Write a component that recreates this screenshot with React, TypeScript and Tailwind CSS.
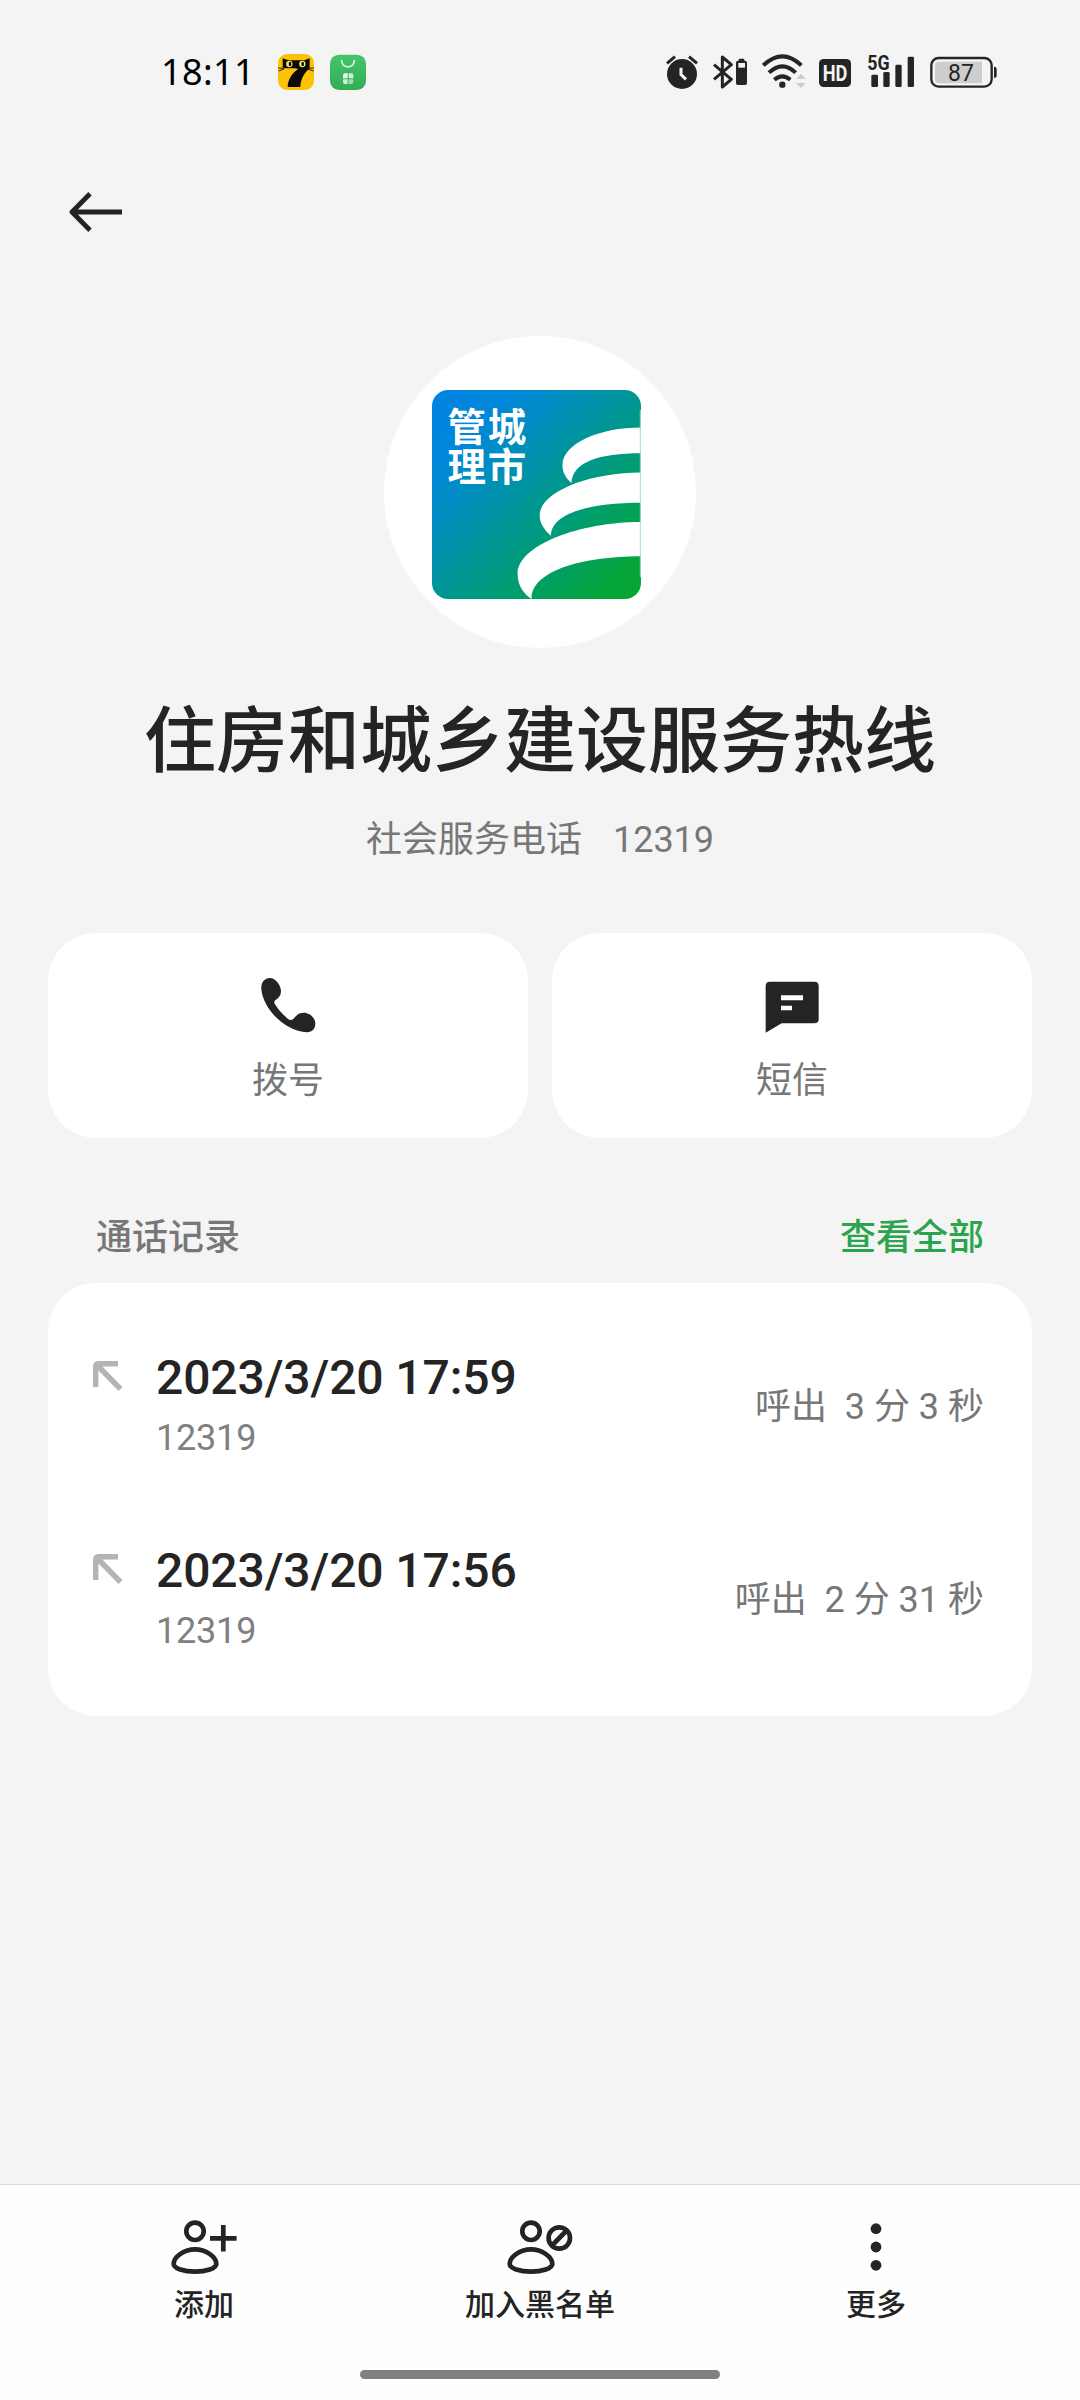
import type { ReactNode } from "react"

const calls = [
  { time: "2023/3/20 17:59", number: "12319", duration: "呼出  3 分 3 秒" },
  { time: "2023/3/20 17:56", number: "12319", duration: "呼出  2 分 31 秒" },
]

function CatAppIcon() {
  return (
    <svg className="size-9" viewBox="0 0 108 108">
      <rect width="108" height="108" rx="27" fill="#fcc205" />
      <path d="M14 13L31 19H79L95 13V43C79 56 68 76 67 99H29C30 76 42 58 60 46Q56 43 50 43H14Z" fill="#0c0a06" />
      <path d="M0 42L16 43M2 51L18 45M108 42L90 43M107 51L88 45" stroke="#0c0a06" strokeWidth="2.5" />
      <circle cx="34" cy="30" r="9.5" fill="#f4e86a" />
      <circle cx="73" cy="30" r="9.5" fill="#f4e86a" />
      <ellipse cx="36" cy="30" rx="4" ry="7" fill="#0c0a06" />
      <ellipse cx="74" cy="30" rx="4" ry="7" fill="#0c0a06" />
    </svg>
  )
}

function StoreAppIcon() {
  return (
    <svg className="size-9" viewBox="0 0 108 108">
      <defs>
        <linearGradient id="store" x1="0" y1="0" x2="0" y2="1">
          <stop offset="0" stopColor="#45c46b" />
          <stop offset="1" stopColor="#31ad56" />
        </linearGradient>
      </defs>
      <rect y="2" width="108" height="106" rx="27" fill="url(#store)" />
      <path d="M35 20C37 45 71 45 73 20" fill="none" stroke="#dcf8e3" strokeWidth="5" strokeLinecap="round" />
      <g fill="#e6fbea">
        <path d="M45 58H53V73H39V64Q39 58 45 58Z" />
        <path d="M56 58H64Q70 58 70 64V73H56Z" opacity=".85" />
        <path d="M39 76H53V90H45Q39 90 39 84Z" opacity=".85" />
        <path d="M56 76H70V84Q70 90 64 90H56Z" opacity=".6" />
      </g>
    </svg>
  )
}

function AlarmIcon() {
  return (
    <svg className="h-[35px] w-8" viewBox="0 0 96 105">
      <circle cx="48" cy="60" r="45" fill="#242424" />
      <path d="M3 28L27 8M69 8L93 28" stroke="#242424" strokeWidth="9" />
      <path d="M45 41V62L60 76" fill="none" stroke="#f4f4f4" strokeWidth="9" />
    </svg>
  )
}

function BluetoothIcon() {
  return (
    <svg className="h-[35px] w-9" viewBox="0 0 108 105">
      <path d="M6 32L58 76L31 99V9L58 32L6 76" fill="none" stroke="#242424" strokeWidth="9" strokeLinejoin="round" />
      <rect x="80" y="14" width="17" height="9" rx="3" fill="#242424" />
      <rect x="72" y="20" width="33" height="73" rx="6" fill="#242424" />
      <rect x="79" y="27" width="20" height="14" fill="#f4f4f4" />
    </svg>
  )
}

function WifiIcon() {
  return (
    <svg className="h-[35px] w-11" viewBox="0 0 132 105">
      <g fill="none" stroke="#242424" strokeWidth="12">
        <path d="M4 34Q61 -20 118 34" />
        <path d="M21 56Q61 18 101 56" />
        <path d="M37 77Q61 57 85 77" />
      </g>
      <circle cx="61" cy="92" r="9.5" fill="#242424" />
      <path d="M117 59L131 75H103ZM117 102L131 87H103Z" fill="#cbcbcb" />
    </svg>
  )
}

function HdIcon() {
  return (
    <svg className="h-[35px] w-8" viewBox="0 0 96 105">
      <rect y="15" width="96" height="84" rx="14" fill="#242424" />
      <text x="48" y="80" textAnchor="middle" textLength="74" lengthAdjust="spacingAndGlyphs" fontFamily="Roboto, sans-serif" fontWeight="700" fontSize="64" fill="#f4f4f4">
        HD
      </text>
    </svg>
  )
}

function SignalIcon() {
  return (
    <svg className="h-[35px] w-12 overflow-visible" viewBox="0 0 144 105">
      <g fill="#242424">
        <text x="1" y="47" textLength="67" lengthAdjust="spacingAndGlyphs" fontFamily="Roboto, sans-serif" fontWeight="700" fontSize="59">
          5G
        </text>
        <rect x="13" y="62" width="20" height="37" rx="4" />
        <rect x="49" y="54" width="19" height="45" rx="4" />
        <rect x="85" y="32" width="19" height="67" rx="4" />
        <rect x="122" y="8" width="19" height="91" rx="4" />
      </g>
    </svg>
  )
}

function BatteryIcon() {
  return (
    <svg className="h-[35px] w-[69px]" viewBox="0 0 207 105">
      <rect x="7" y="12" width="181" height="86" rx="22" fill="none" stroke="#242424" strokeWidth="7" />
      <path d="M30 23H159V88H30Q18 88 18 76V35Q18 23 30 23Z" fill="#cdcdcd" />
      <path d="M195 38Q203 38 203 46V64Q203 72 195 72Z" fill="#242424" />
      <text x="96" y="80" textAnchor="middle" fontFamily="Roboto, sans-serif" fontSize="69" fill="#242424">
        87
      </text>
    </svg>
  )
}

function StatusBar() {
  return (
    <div className="flex h-[120px] items-start pl-[161px] pr-[82px] pt-[54px]">
      <span className="w-[117px] font-['Noto_Sans'] text-[36px] leading-[36px] tracking-[0.4px] text-black">18:11</span>
      <CatAppIcon />
      <div className="ml-4">
        <StoreAppIcon />
      </div>
      <div className="ml-auto flex">
        <AlarmIcon />
        <div className="ml-3.5">
          <BluetoothIcon />
        </div>
        <div className="ml-3.5">
          <WifiIcon />
        </div>
        <div className="ml-[13px]">
          <HdIcon />
        </div>
        <div className="ml-4">
          <SignalIcon />
        </div>
        <div className="ml-3.5">
          <BatteryIcon />
        </div>
      </div>
    </div>
  )
}

function Avatar() {
  return (
    <div className="flex size-[312px] items-center justify-center rounded-full bg-white pr-[7px] pt-[4px]">
      <svg className="size-[209px]" viewBox="0 0 625 625">
        <defs>
          <linearGradient id="logo" x1="0" y1="0" x2="1" y2="1">
            <stop offset="0" stopColor="#0083e2" />
            <stop offset=".2" stopColor="#0087d8" />
            <stop offset=".35" stopColor="#008fbb" />
            <stop offset=".5" stopColor="#009595" />
            <stop offset=".72" stopColor="#009f63" />
            <stop offset=".92" stopColor="#06a535" />
          </linearGradient>
          <clipPath id="tile">
            <rect width="625" height="625" rx="48" />
          </clipPath>
        </defs>
        <g clipPath="url(#tile)">
          <rect width="625" height="625" fill="url(#logo)" />
          <g fill="#fff">
            <path d="M625 112C500 112 390 160 390 225C390 248 402 265 417 278C420 215 500 189 625 189Z" />
            <path d="M625 247C470 247 322 305 322 375C322 400 338 420 356 436C355 370 470 337 625 337Z" />
            <path d="M625 395C440 395 256 465 256 550C256 585 275 610 298 625C295 545 440 497 625 497Z" />
          </g>
          <path d="M623 60V560" stroke="#a9e3bd" strokeWidth="3" />
        </g>
        <text y="153" fill="#fff" fontFamily="'Noto Sans CJK SC', sans-serif" fontWeight="700" fontSize="115" letterSpacing="6">
          <tspan x="46">管城</tspan>
          <tspan x="46" dy="119">
            理市
          </tspan>
        </text>
      </svg>
    </div>
  )
}

function PhoneIcon() {
  return (
    <svg className="size-[55px]" viewBox="0 0 165 165">
      <path
        d="M27 0C10 0 0 14 1 33C5 90 70 160 138 163C154 163 163 152 163 136C163 122 148 104 128 104C110 104 104 116 97 123C92 128 86 127 80 122C65 110 52 95 42 79C39 74 39 69 44 66C54 60 60 52 60 40C60 22 44 0 27 0Z"
        fill="#242424"
      />
    </svg>
  )
}

function MessageIcon() {
  return (
    <svg className="size-[55px]" viewBox="-2 -11 165 165">
      <path d="M13 0H146Q159 0 159 13V112Q159 125 146 125H48L0 153V13Q0 0 13 0Z" fill="#242424" />
      <path d="M46 41H112V56H46ZM46 72H79V86H46Z" fill="#fff" />
    </svg>
  )
}

function OutgoingIcon() {
  return (
    <svg className="size-[30px]" viewBox="0 0 30 30" fill="none" stroke="#b4b4b4" strokeWidth="5.4">
      <path d="M2.7 26V5.7Q2.7 2.7 5.7 2.7H25M4 4L27.5 28" />
    </svg>
  )
}

function PersonIcon({ children }: { children: ReactNode }) {
  return (
    <svg className="size-[72px]" viewBox="0 0 72 72" fill="none" stroke="#242424" strokeWidth="4.7">
      <circle cx="27" cy="20.3" r="8.7" />
      <path d="M27 38.3C37.5 38.3 48.3 45.5 48.3 53C48.3 57.4 38 60.6 27 60.6S5.7 57.4 5.7 53C5.7 45.5 16.5 38.3 27 38.3Z" />
      {children}
    </svg>
  )
}

function ActionCard({ icon, label }: { icon: ReactNode; label: string }) {
  return (
    <button className="flex h-[205px] flex-1 flex-col items-center rounded-[48px] bg-white pt-[45px]">
      {icon}
      <span className="mt-[21px] text-[36px] leading-[54px] text-[#777]">{label}</span>
    </button>
  )
}

function TabButton({ icon, label }: { icon: ReactNode; label: string }) {
  return (
    <button className="flex flex-1 flex-col items-center">
      {icon}
      <span className="text-[30px] font-medium leading-[44px] text-[#242424]">{label}</span>
    </button>
  )
}

export default function App() {
  return (
    <div className="flex h-[2400px] w-[1080px] flex-col bg-[#f4f4f4] font-[Roboto,'Noto_Sans_CJK_SC',sans-serif]">
      <StatusBar />

      <header className="h-[216px] pl-[69px] pt-[72px]">
        <svg className="h-10 w-[53px]" viewBox="0 0 53 40" fill="none" stroke="#242424" strokeWidth="4.8">
          <path d="M21 1.8L3 20L21 38.2M3 20H53" strokeLinejoin="round" />
        </svg>
      </header>

      <section className="flex flex-col items-center">
        <Avatar />
        <h1 className="mt-[42px] text-[72px] font-medium leading-[104px] text-[#242424]">住房和城乡建设服务热线</h1>
        <p className="mt-[19px] flex gap-[31px] text-[36px] leading-[54px] text-[#777]">
          <span>社会服务电话</span>
          <span>12319</span>
        </p>
      </section>

      <div className="mt-[66px] flex gap-6 px-12">
        <ActionCard icon={<PhoneIcon />} label="拨号" />
        <ActionCard icon={<MessageIcon />} label="短信" />
      </div>

      <div className="mt-[73px] flex h-[72px] justify-between px-24 text-[36px] font-medium leading-[54px]">
        <span className="text-[#777]">通话记录</span>
        <span className="text-[#2aa44d]">查看全部</span>
      </div>

      <div className="mx-12 h-[433px] rounded-[48px] bg-white pl-[45px] pr-12 pt-[26px]">
        {calls.map((call) => (
          <div key={call.time} className="flex h-[193px] items-center">
            <div className="-mt-[60px] h-[30px]">
              <OutgoingIcon />
            </div>
            <div className="ml-[33px]">
              <div className="text-[48px] font-medium leading-[64px] tracking-[-0.1px] text-[#242424]">{call.time}</div>
              <div className="text-[36px] leading-[56px] tracking-[-0.2px] text-[#808080]">{call.number}</div>
            </div>
            <div className="ml-auto whitespace-pre pt-[3px] text-[36px] leading-[54px] text-[#777]">{call.duration}</div>
          </div>
        ))}
      </div>

      <footer className="mt-auto flex h-[216px] flex-col items-center border-t border-[#dcdcdc] bg-[#fefefe] pt-[26px]">
        <nav className="flex w-full px-9">
          <TabButton
            icon={
              <PersonIcon>
                <path d="M42 27.3H68.6M55.3 14V40.6" />
              </PersonIcon>
            }
            label="添加"
          />
          <TabButton
            icon={
              <PersonIcon>
                <circle cx="55.3" cy="27" r="10.7" />
                <path d="M48 34.5L62.6 19.5" />
              </PersonIcon>
            }
            label="加入黑名单"
          />
          <TabButton
            icon={
              <svg className="size-[72px]" viewBox="0 0 72 72" fill="#242424">
                <circle cx="36" cy="17.7" r="5.4" />
                <circle cx="36" cy="36" r="5.4" />
                <circle cx="36" cy="54.3" r="5.4" />
              </svg>
            }
            label="更多"
          />
        </nav>
        <div className="mt-[43px] h-[9px] w-[360px] rounded-full bg-[#808080]" />
      </footer>
    </div>
  )
}
